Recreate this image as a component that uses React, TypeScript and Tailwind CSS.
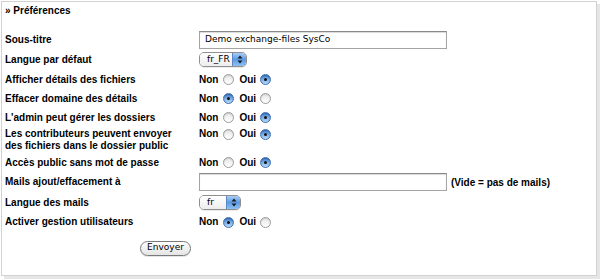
import React from "react";

const Radio = ({ checked }: { checked?: boolean }) =>
  checked ? (
    <span className="flex h-[11px] w-[11px] shrink-0 items-center justify-center rounded-full border border-[#3d6fb3] bg-gradient-to-b from-[#3f7fd3] to-[#b9dcf8] shadow-[inset_0_1px_1px_rgba(0,0,0,0.25)]">
      <span className="h-[3px] w-[3px] rounded-full bg-[#111]" />
    </span>
  ) : (
    <span className="block h-[11px] w-[11px] shrink-0 rounded-full border border-[#9c9c9c] bg-gradient-to-b from-[#e6e6e6] to-white shadow-[inset_0_1px_1px_rgba(0,0,0,0.12)]" />
  );

const YesNo = ({ oui }: { oui: boolean }) => (
  <div className="flex items-center leading-[12px]">
    <span>Non</span>
    <span className="ml-[5px] flex items-center">
      <Radio checked={!oui} />
    </span>
    <span className="ml-[5px]">Oui</span>
    <span className="ml-[4px] flex items-center">
      <Radio checked={oui} />
    </span>
  </div>
);

const Select = ({ value, w }: { value: string; w: string }) => (
  <span
    className={`flex h-[15px] overflow-hidden rounded-[5px] border border-[#8f8f8f] shadow-[0_1px_0_rgba(0,0,0,0.08)] ${w}`}
  >
    <span className="flex flex-1 items-center bg-gradient-to-b from-white to-[#ededed] pl-[7px] text-[9px] font-normal text-black [font-family:'DejaVu_Sans',sans-serif]">
      {value}
    </span>
    <span className="flex w-[14px] items-center justify-center border-l border-[#5b87c4] bg-gradient-to-b from-[#a9cdf4] via-[#5a9ae4] to-[#8fc0f2]">
      <svg width="6" height="9" viewBox="0 0 6 9">
        <path d="M3 0.5 L5.5 3.5 L0.5 3.5 Z" fill="#1b1b1b" />
        <path d="M3 8.5 L5.5 5.5 L0.5 5.5 Z" fill="#1b1b1b" />
      </svg>
    </span>
  </span>
);

const TextInput = ({ value }: { value?: string }) => (
  <div className="flex h-[18px] w-[248px] items-center border border-[#a4a4a4] border-t-[#8a8a8a] bg-white pl-[5px] text-[9px] font-normal text-black shadow-[inset_0_1px_1px_rgba(0,0,0,0.15)] [font-family:'DejaVu_Sans',sans-serif]">
    {value}
  </div>
);

const Row = ({
  label,
  h,
  children,
  start,
}: {
  label: React.ReactNode;
  h: string;
  children: React.ReactNode;
  start?: boolean;
}) => (
  <div className={`flex ${h} ${start ? "items-start pt-[1px]" : "items-center"}`}>
    <div className="w-[197px] pl-[3px] leading-[12px]">{label}</div>
    <div className="flex items-center">{children}</div>
  </div>
);

export default function App() {
  return (
    <div className="h-[280px] w-[600px] overflow-hidden bg-white text-[10px] font-bold text-black [font-family:'Liberation_Sans',Arial,sans-serif]">
      <div className="ml-px mt-px h-[275px] w-[596px] border border-[#d2d2d2] shadow-[3px_3px_0_#e6e6e6]">
        <div className="flex h-[16px] items-center pl-[3px]">» Préférences</div>
        <div className="h-[13px]" />
        <Row label="Sous-titre" h="h-[18px]">
          <TextInput value="Demo exchange-files SysCo" />
        </Row>
        <Row label="Langue par défaut" h="h-[21px]">
          <Select value="fr_FR" w="w-[48px]" />
        </Row>
        <Row label="Afficher détails des fichiers" h="h-[19px]">
          <YesNo oui={true} />
        </Row>
        <Row label="Effacer domaine des détails" h="h-[19px]">
          <YesNo oui={false} />
        </Row>
        <Row label="L'admin peut gérer les dossiers" h="h-[19px]">
          <YesNo oui={true} />
        </Row>
        <Row
          label={
            <>
              Les contributeurs peuvent envoyer
              <br />
              des fichiers dans le dossier public
            </>
          }
          h="h-[27px]"
          start
        >
          <YesNo oui={true} />
        </Row>
        <Row label="Accès public sans mot de passe" h="h-[17px]">
          <YesNo oui={true} />
        </Row>
        <Row label="Mails ajout/effacement à" h="h-[22px]">
          <TextInput />
          <span className="ml-[4px]">(Vide = pas de mails)</span>
        </Row>
        <Row label="Langue des mails" h="h-[19px]">
          <Select value="fr" w="w-[42px]" />
        </Row>
        <Row label="Activer gestion utilisateurs" h="h-[20px]">
          <YesNo oui={false} />
        </Row>
        <div className="h-[8px]" />
        <div className="flex h-[16px] items-center pl-[138px]">
          <button className="flex h-[15px] w-[51px] items-center justify-center rounded-full border border-[#7a7a7a] bg-gradient-to-b from-white to-[#e4e4e4] text-[9px] font-normal text-black shadow-[0_1px_0_rgba(0,0,0,0.1)] [font-family:'DejaVu_Sans',sans-serif]">
            Envoyer
          </button>
        </div>
      </div>
    </div>
  );
}
